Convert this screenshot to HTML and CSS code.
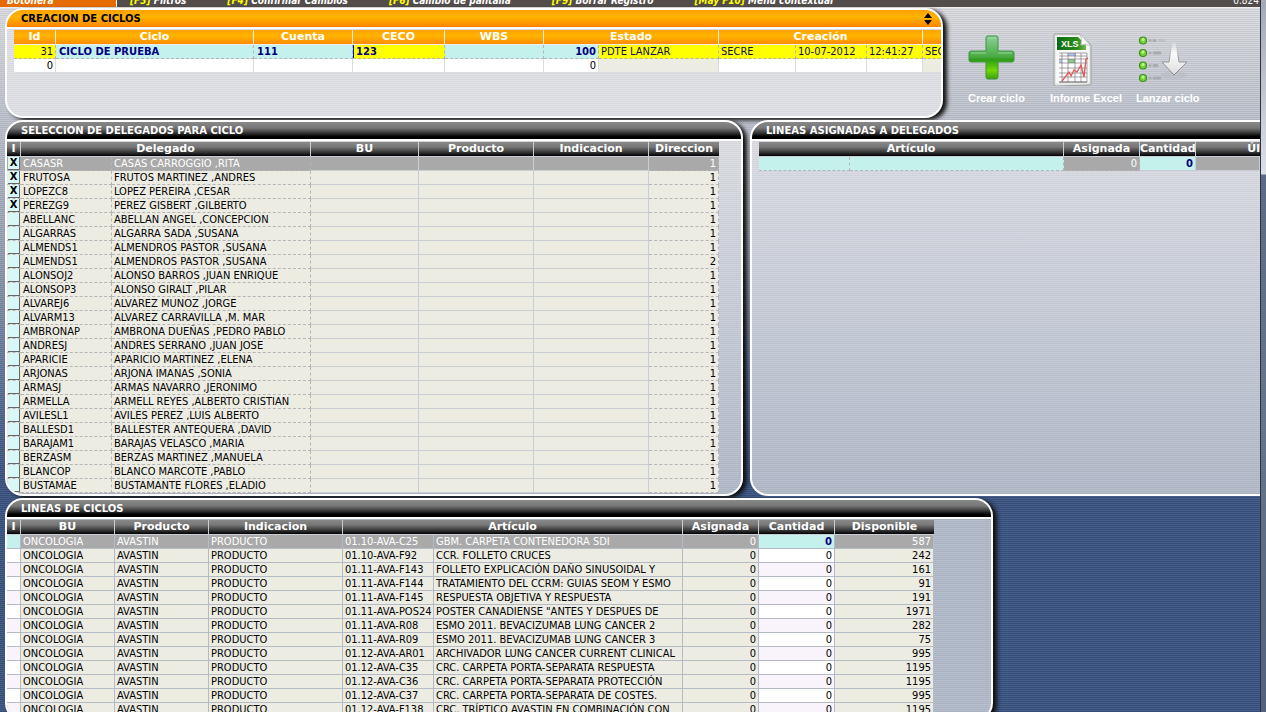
FILE: index.html
```html
<!DOCTYPE html>
<html lang="es">
<head>
<meta charset="utf-8">
<title>Creación de ciclos</title>
<link rel="stylesheet" href="styles.css">
</head>
<body>
<div class="screen">
<nav class="toolbar">
  <a class="tab" href="#">Botonera</a>
  <a href="#"><b>[F3]</b> Filtros</a>
  <a href="#"><b>[F4]</b> Confirmar Cambios</a>
  <a href="#"><b>[F6]</b> Cambio de pantalla</a>
  <a href="#"><b>[F9]</b> Borrar Registro</a>
  <a href="#"><b>[May F10]</b> Menú contextual</a>
  <span class="version">0.824</span>
</nav>

<div class="row top-row">
<section class="panel orange">
  <header class="title"><h2>CREACION DE CICLOS</h2>
    <svg class="sorter" width="8" height="12" viewBox="0 0 8 12" aria-hidden="true"><path d="M4 0 8 5H0zM4 12 0 7H8z"/></svg>
  </header>
  <table class="cycles">
    <colgroup><col class="w42"><col class="w198"><col class="w99"><col class="w92"><col class="w99"><col class="w55"><col class="w120"><col class="w77"><col class="w71"><col class="w56"><col class="w56"></colgroup>
    <thead><tr><th>Id</th><th>Ciclo</th><th>Cuenta</th><th>CECO</th><th>WBS</th><th colspan="2">Estado</th><th colspan="3">Creación</th><th></th></tr></thead>
    <tbody>
      <tr class="current"><td class="num yellow">31</td><td class="aqua"><input aria-label="Ciclo" value="CICLO DE PRUEBA"></td><td class="aqua"><input aria-label="Cuenta" value="111"></td><td class="yellow caret"><input aria-label="CECO" value="123"></td><td class="aqua"><input aria-label="WBS"></td><td class="aqua"><input class="right" aria-label="Estado" value="100"></td><td class="yellow">PDTE LANZAR</td><td class="yellow">SECRE</td><td class="yellow">10-07-2012</td><td class="yellow">12:41:27</td><td class="yellow">SEC</td></tr>
      <tr class="blank"><td class="num">0</td><td></td><td></td><td></td><td></td><td class="num">0</td><td class="beige"></td><td></td><td></td><td></td><td class="beige"></td></tr>
    </tbody>
  </table>
</section>
<div class="actions">
  <button class="action">
    <svg width="48" height="56" viewBox="0 0 48 56" aria-hidden="true">
      <defs><linearGradient id="plus" x1="0" y1="0" x2="0" y2="1"><stop offset="0" stop-color="#8fcf9b"/><stop offset=".48" stop-color="#49ab43"/><stop offset=".55" stop-color="#2f9b16"/><stop offset=".8" stop-color="#72d800"/><stop offset="1" stop-color="#3e9f0c"/></linearGradient></defs>
      <path d="M20 6h8q2 0 2 2v13h14q2 0 2 2v7q0 2-2 2H30v15q0 2-2 2h-8q-2 0-2-2V32H3q-2 0-2-2v-7q0-2 2-2h15V8q0-2 2-2z" fill="url(#plus)" stroke="#3a9640"/>
      <path d="M20 8h8M3 23h15M30 23h14" stroke="#b5e2b9" opacity=".7"/>
    </svg>
    <span>Crear ciclo</span>
  </button>
  <button class="action">
    <svg width="48" height="56" viewBox="0 0 48 56" aria-hidden="true">
      <path d="M5 4h25l11 11v38q0 2-2 2L6 56q-2 0-2-2V6q0-2 1-2z" fill="#e8eae8" stroke="#9b9e9b"/>
      <path d="M6 6h23l10 10v36L6 53z" fill="#f8f9f8"/>
      <linearGradient id="xls"><stop offset="0" stop-color="#0a6b16"/><stop offset=".7" stop-color="#2c8d17"/><stop offset="1" stop-color="#76b74d"/></linearGradient>
      <path d="M7 7h21l8 8v5H7z" fill="url(#xls)"/>
      <path d="M30 4q3 5 1 11 5-2 10 1z" fill="#fff" stroke="#c4c8c4"/>
      <text x="11" y="17" class="xls-label">XLS</text>
      <path d="M9 23h29v29H9z" fill="#fff"/>
      <path d="M18 23h8v3h-8zM9 29h3v4H9z" fill="#b3c4ef"/><path d="M18 29h7v4h-7z" fill="#8bc888"/>
      <path d="M9 23h28M9 26h28M9 29h28M9 33h28M9 38h28M9 43h28M9 47h28M12 23v29M18 23v29M25 23v29M31 23v29M37 23v29" fill="none" stroke="#666" stroke-width=".6"/>
      <path d="m12 51 7-9 2 4 3-6 3 2 4-7 3 12 2-18 2-1" fill="none" stroke="#e05a5a" stroke-width="1.4"/>
      <path d="M9 52h28" stroke="#555"/>
    </svg>
    <span>Informe Excel</span>
  </button>
  <button class="action">
    <svg width="56" height="56" viewBox="0 0 56 56" aria-hidden="true">
      <defs><linearGradient id="arrow" x1="0" y1="0" x2="0" y2="1"><stop offset="0" stop-color="#fff" stop-opacity=".1"/><stop offset=".35" stop-color="#fafafa"/><stop offset="1" stop-color="#dedede"/></linearGradient><linearGradient id="edge" x1="0" y1="0" x2="0" y2="1"><stop offset="0" stop-color="#aaa" stop-opacity="0"/><stop offset=".5" stop-color="#999"/><stop offset="1" stop-color="#888"/></linearGradient></defs>
      <g fill="#76d631" stroke="#3d8d1d" stroke-width="1.2"><circle cx="7" cy="10.500" r="3.500"/><circle cx="7" cy="23" r="3.500"/><circle cx="7" cy="35.500" r="3.500"/><circle cx="7" cy="48" r="3.500"/></g>
      <g fill="#c3f59c"><circle cx="7" cy="9.500" r="1.500"/><circle cx="7" cy="22" r="1.500"/><circle cx="7" cy="34.500" r="1.500"/><circle cx="7" cy="47" r="1.500"/></g>
      <g stroke="#a9abaf" stroke-width="3" stroke-linecap="round"><path d="M14 10.500h.1M18 10.500h1M14 23h.1M18 23h6M14 35.500h.1M18 35.500h3M14 48h.1M18 48h6"/><path d="M23 10.500h2M28 10.500h.1" opacity=".4"/></g>
      <ellipse cx="38" cy="45" rx="13" ry="4" fill="#888" opacity=".12"/>
      <path d="M36 12h4l3 20h8L38 45 26 32h7z" fill="url(#arrow)" stroke="url(#edge)"/>
    </svg>
    <span>Lanzar ciclo</span>
  </button>
</div>
</div>

<div class="row middle-row">
<section class="panel delegates">
  <header class="title"><h2>SELECCION DE DELEGADOS PARA CICLO</h2></header>
  <table class="grid dashed">
    <colgroup><col class="w14"><col class="w91"><col class="w199"><col class="w108"><col class="w115"><col class="w115"><col class="w70"></colgroup>
    <thead><tr><th>I</th><th colspan="2">Delegado</th><th>BU</th><th>Producto</th><th>Indicacion</th><th>Direccion</th></tr></thead>
    <tbody>
      <tr class="selected"><td><button class="mark">X</button></td><td>CASASR</td><td>CASAS CARROGGIO ,RITA</td><td></td><td></td><td></td><td>1</td></tr>
      <tr><td><button class="mark">X</button></td><td>FRUTOSA</td><td>FRUTOS MARTINEZ ,ANDRES</td><td></td><td></td><td></td><td>1</td></tr>
      <tr><td><button class="mark">X</button></td><td>LOPEZC8</td><td>LOPEZ PEREIRA ,CESAR</td><td></td><td></td><td></td><td>1</td></tr>
      <tr><td><button class="mark">X</button></td><td>PEREZG9</td><td>PEREZ GISBERT ,GILBERTO</td><td></td><td></td><td></td><td>1</td></tr>
      <tr><td><button class="mark" aria-label="Incluir"></button></td><td>ABELLANC</td><td>ABELLAN ANGEL ,CONCEPCION</td><td></td><td></td><td></td><td>1</td></tr>
      <tr><td><button class="mark" aria-label="Incluir"></button></td><td>ALGARRAS</td><td>ALGARRA SADA ,SUSANA</td><td></td><td></td><td></td><td>1</td></tr>
      <tr><td><button class="mark" aria-label="Incluir"></button></td><td>ALMENDS1</td><td>ALMENDROS PASTOR ,SUSANA</td><td></td><td></td><td></td><td>1</td></tr>
      <tr><td><button class="mark" aria-label="Incluir"></button></td><td>ALMENDS1</td><td>ALMENDROS PASTOR ,SUSANA</td><td></td><td></td><td></td><td>2</td></tr>
      <tr><td><button class="mark" aria-label="Incluir"></button></td><td>ALONSOJ2</td><td>ALONSO BARROS ,JUAN ENRIQUE</td><td></td><td></td><td></td><td>1</td></tr>
      <tr><td><button class="mark" aria-label="Incluir"></button></td><td>ALONSOP3</td><td>ALONSO GIRALT ,PILAR</td><td></td><td></td><td></td><td>1</td></tr>
      <tr><td><button class="mark" aria-label="Incluir"></button></td><td>ALVAREJ6</td><td>ALVAREZ MUNOZ ,JORGE</td><td></td><td></td><td></td><td>1</td></tr>
      <tr><td><button class="mark" aria-label="Incluir"></button></td><td>ALVARM13</td><td>ALVAREZ CARRAVILLA ,M. MAR</td><td></td><td></td><td></td><td>1</td></tr>
      <tr><td><button class="mark" aria-label="Incluir"></button></td><td>AMBRONAP</td><td>AMBRONA DUEÑAS ,PEDRO PABLO</td><td></td><td></td><td></td><td>1</td></tr>
      <tr><td><button class="mark" aria-label="Incluir"></button></td><td>ANDRESJ</td><td>ANDRES SERRANO ,JUAN JOSE</td><td></td><td></td><td></td><td>1</td></tr>
      <tr><td><button class="mark" aria-label="Incluir"></button></td><td>APARICIE</td><td>APARICIO MARTINEZ ,ELENA</td><td></td><td></td><td></td><td>1</td></tr>
      <tr><td><button class="mark" aria-label="Incluir"></button></td><td>ARJONAS</td><td>ARJONA IMANAS ,SONIA</td><td></td><td></td><td></td><td>1</td></tr>
      <tr><td><button class="mark" aria-label="Incluir"></button></td><td>ARMASJ</td><td>ARMAS NAVARRO ,JERONIMO</td><td></td><td></td><td></td><td>1</td></tr>
      <tr><td><button class="mark" aria-label="Incluir"></button></td><td>ARMELLA</td><td>ARMELL REYES ,ALBERTO CRISTIAN</td><td></td><td></td><td></td><td>1</td></tr>
      <tr><td><button class="mark" aria-label="Incluir"></button></td><td>AVILESL1</td><td>AVILES PEREZ ,LUIS ALBERTO</td><td></td><td></td><td></td><td>1</td></tr>
      <tr><td><button class="mark" aria-label="Incluir"></button></td><td>BALLESD1</td><td>BALLESTER ANTEQUERA ,DAVID</td><td></td><td></td><td></td><td>1</td></tr>
      <tr><td><button class="mark" aria-label="Incluir"></button></td><td>BARAJAM1</td><td>BARAJAS VELASCO ,MARIA</td><td></td><td></td><td></td><td>1</td></tr>
      <tr><td><button class="mark" aria-label="Incluir"></button></td><td>BERZASM</td><td>BERZAS MARTINEZ ,MANUELA</td><td></td><td></td><td></td><td>1</td></tr>
      <tr><td><button class="mark" aria-label="Incluir"></button></td><td>BLANCOP</td><td>BLANCO MARCOTE ,PABLO</td><td></td><td></td><td></td><td>1</td></tr>
      <tr><td><button class="mark" aria-label="Incluir"></button></td><td>BUSTAMAE</td><td>BUSTAMANTE FLORES ,ELADIO</td><td></td><td></td><td></td><td>1</td></tr>
    </tbody>
  </table>
</section>
<section class="panel assigned">
  <header class="title"><h2>LINEAS ASIGNADAS A DELEGADOS</h2></header>
  <table class="grid dashed">
    <colgroup><col class="w91"><col class="w214"><col class="w76"><col class="w56"><col class="w64"></colgroup>
    <thead><tr><th colspan="2">Artículo</th><th>Asignada</th><th>Cantidad</th><th class="last">Úl</th></tr></thead>
    <tbody><tr class="selected"><td class="aqua"></td><td class="aqua"></td><td class="num">0</td><td class="aqua"><input class="right" aria-label="Cantidad" value="0"></td><td></td></tr></tbody>
  </table>
</section>
</div>

<section class="panel lines">
  <header class="title"><h2>LINEAS DE CICLOS</h2></header>
  <table class="grid">
    <colgroup><col class="w14"><col class="w94"><col class="w94"><col class="w134"><col class="w91"><col class="w249"><col class="w76"><col class="w76"><col class="w99"></colgroup>
    <thead><tr><th>I</th><th>BU</th><th>Producto</th><th>Indicacion</th><th colspan="2">Artículo</th><th>Asignada</th><th>Cantidad</th><th>Disponible</th></tr></thead>
    <tbody>
      <tr class="selected"><td class="aqua"></td><td>ONCOLOGIA</td><td>AVASTIN</td><td>PRODUCTO</td><td>01.10-AVA-C25</td><td>GBM. CARPETA CONTENEDORA SDI</td><td>0</td><td class="aqua"><input class="right" aria-label="Cantidad" value="0"></td><td>587</td></tr>
      <tr><td></td><td>ONCOLOGIA</td><td>AVASTIN</td><td>PRODUCTO</td><td>01.10-AVA-F92</td><td>CCR. FOLLETO CRUCES</td><td>0</td><td>0</td><td>242</td></tr>
      <tr><td></td><td>ONCOLOGIA</td><td>AVASTIN</td><td>PRODUCTO</td><td>01.11-AVA-F143</td><td>FOLLETO EXPLICACIÓN DAÑO SINUSOIDAL Y</td><td>0</td><td>0</td><td>161</td></tr>
      <tr><td></td><td>ONCOLOGIA</td><td>AVASTIN</td><td>PRODUCTO</td><td>01.11-AVA-F144</td><td>TRATAMIENTO DEL CCRM: GUIAS SEOM Y ESMO</td><td>0</td><td>0</td><td>91</td></tr>
      <tr><td></td><td>ONCOLOGIA</td><td>AVASTIN</td><td>PRODUCTO</td><td>01.11-AVA-F145</td><td>RESPUESTA OBJETIVA Y RESPUESTA</td><td>0</td><td>0</td><td>191</td></tr>
      <tr><td></td><td>ONCOLOGIA</td><td>AVASTIN</td><td>PRODUCTO</td><td>01.11-AVA-POS24</td><td>POSTER CANADIENSE "ANTES Y DESPUES DE</td><td>0</td><td>0</td><td>1971</td></tr>
      <tr><td></td><td>ONCOLOGIA</td><td>AVASTIN</td><td>PRODUCTO</td><td>01.11-AVA-R08</td><td>ESMO 2011. BEVACIZUMAB LUNG CANCER 2</td><td>0</td><td>0</td><td>282</td></tr>
      <tr><td></td><td>ONCOLOGIA</td><td>AVASTIN</td><td>PRODUCTO</td><td>01.11-AVA-R09</td><td>ESMO 2011. BEVACIZUMAB LUNG CANCER 3</td><td>0</td><td>0</td><td>75</td></tr>
      <tr><td></td><td>ONCOLOGIA</td><td>AVASTIN</td><td>PRODUCTO</td><td>01.12-AVA-AR01</td><td>ARCHIVADOR LUNG CANCER CURRENT CLINICAL</td><td>0</td><td>0</td><td>995</td></tr>
      <tr><td></td><td>ONCOLOGIA</td><td>AVASTIN</td><td>PRODUCTO</td><td>01.12-AVA-C35</td><td>CRC. CARPETA PORTA-SEPARATA RESPUESTA</td><td>0</td><td>0</td><td>1195</td></tr>
      <tr><td></td><td>ONCOLOGIA</td><td>AVASTIN</td><td>PRODUCTO</td><td>01.12-AVA-C36</td><td>CRC. CARPETA PORTA-SEPARATA PROTECCIÓN</td><td>0</td><td>0</td><td>1195</td></tr>
      <tr><td></td><td>ONCOLOGIA</td><td>AVASTIN</td><td>PRODUCTO</td><td>01.12-AVA-C37</td><td>CRC. CARPETA PORTA-SEPARATA DE COSTES.</td><td>0</td><td>0</td><td>995</td></tr>
      <tr><td></td><td>ONCOLOGIA</td><td>AVASTIN</td><td>PRODUCTO</td><td>01.12-AVA-F138</td><td>CRC. TRÍPTICO AVASTIN EN COMBINACIÓN CON</td><td>0</td><td>0</td><td>1195</td></tr>
    </tbody>
  </table>
</section>
</div>
<div class="scroll-edge"></div>
</body>
</html>
```
FILE: styles.css
```css
* { box-sizing: border-box; }
body {
  margin: 0;
  height: 100vh;
  display: flex;
  overflow: hidden;
  font: 11px/13px "DejaVu Sans Condensed", "DejaVu Sans", sans-serif;
  color: #000;
}
.screen {
  flex: 1;
  min-width: 0;
  overflow: hidden;
  background:
    repeating-linear-gradient(rgba(255,255,255,.07) 0 1px, rgba(0,0,30,.06) 1px 2px),
    linear-gradient(#dcdde0 0, #bcc1cb 120px, #98a1b3 240px, #5d7196 380px, #38527f 480px, #38527f 100%);
}
.scroll-edge {
  width: 6px;
  border-left: 1px solid #2c3340;
  background: linear-gradient(#a4a9b6 0, #dcdfe5 174px, #5b6b85 175px, #66768a 60%, #52627d 100%);
}

.toolbar {
  display: flex;
  align-items: flex-end;
  gap: 41px;
  height: 8px;
  overflow: hidden;
  background: #524d4b;
  border-bottom: 1px solid #eee;
  font-size: 10px;
  font-weight: bold;
  font-style: italic;
  line-height: 13px;
  white-space: nowrap;
}
.toolbar a { color: #fff; text-decoration: none; }
.toolbar b { color: #ff0; }
.toolbar .tab {
  width: 117px;
  margin-right: -28px;
  padding-left: 7px;
  background: #e66b00;
  border-right: 1px solid #fff;
}
.version {
  margin-left: auto;
  padding-right: 1px;
  color: #fff;
  font-weight: normal;
  font-style: normal;
}

.row { display: grid; padding-left: 5px; }
.top-row { grid-template-columns: 938fr 317fr; height: 112px; padding-bottom: 2px; }
.middle-row { grid-template-columns: 738fr 510fr; column-gap: 7px; height: 378px; padding-bottom: 2px; }

.panel {
  position: relative;
  overflow: hidden;
  min-width: 0;
  border: 2px solid #fff;
  border-radius: 18px;
  background:
    repeating-linear-gradient(rgba(255,255,255,.1) 0 1px, rgba(0,0,40,.03) 1px 2px),
    linear-gradient(#dedfe3, #cdd1db 35%, #afb8c7);
  box-shadow: 4px 2px 4px #111;
}
.orange {
  background:
    repeating-linear-gradient(rgba(255,255,255,.1) 0 1px, rgba(0,0,40,.03) 1px 2px),
    #dfe0e4;
}
.assigned { border-right: 0; border-radius: 18px 0 0 18px; box-shadow: none; }
.lines {
  width: 983px;
  max-width: calc(100% - 10px);
  width: calc(79% - 7px);
  margin-left: 5px;
  padding-bottom: 2px;
  background:
    repeating-linear-gradient(rgba(255,255,255,.1) 0 1px, rgba(0,0,40,.04) 1px 2px),
    #b0b9c8;
}
.title {
  display: flex;
  align-items: center;
  justify-content: space-between;
  height: 19px;
  padding: 0 9px 0 14px;
  border-bottom: 2px solid #fff;
  background: linear-gradient(#888 0, #777 35%, #333 65%, #000 85%);
  color: #fff;
}
.title h2 { margin: 0; font: bold 10px/14px "DejaVu Sans", sans-serif; }
.orange .title { background: linear-gradient(#ffa000, #ffb400 40%, #ff8400); color: #000; }

table { border-collapse: separate; border-spacing: 0; table-layout: fixed; width: 0; margin-top: 1px; }
.cycles { margin-left: 7px; }
.assigned table { margin-left: 7px; }
th {
  height: 15px;
  padding: 0;
  overflow: hidden;
  border-right: 1px solid #c9cdd6;
  border-bottom: 1px solid #c9cdd6;
  background: linear-gradient(#888, #777 35%, #333 75%, #000);
  color: #fff;
  font: bold 11px/14px "DejaVu Sans", sans-serif;
  white-space: nowrap;
}
th:last-child { border-right: 0; }
th.last { padding-right: 0; text-align: right; }
.cycles th { background: linear-gradient(#ffa200, #ffb400 40%, #ff8c00); border-color: #eee; }
td {
  height: 14px;
  padding: 0 2px;
  overflow: hidden;
  border-right: 1px solid #b4bac6;
  border-bottom: 1px solid #b4bac6;
  background: #ecece3;
  white-space: nowrap;
}
td:nth-child(5) { padding-right: 0; }
.dashed td { border-right: 1px dashed #b5b5b8; border-bottom: 1px dashed #b5b5b8; }
.dashed td:nth-child(4), .dashed td:nth-child(5), .dashed td:nth-child(6) { border-style: solid; border-color: #c9cdd6; border-width: 0 1px 1px 0; }
.selected td { background: #a9a9a9; color: #fff; }
.cycles td { background: #fff; border-color: #ddd; }
.current td { border: dashed #b5b5b8; border-width: 0 1px 1px 0; color: #101050; }
.cycles .yellow { background: #ff0; }
.cycles .beige { background: #ecece3; }
.cycles .aqua, .selected .aqua { background: #c5f1ed; }
.num, .delegates td:last-child, .lines td:nth-child(n+7) { text-align: right; }
.lines td:first-child, .lines td:nth-child(8) { background: #fff; }
.lines tr:nth-child(odd) td:first-child, .lines tr:nth-child(odd) td:nth-child(8) { background: #f9f4fc; }
.lines .selected td.aqua:nth-child(n) { background: #c5f1ed; }
.current .caret { box-shadow: inset 1px 0 #00f; }
.delegates td:first-child { padding: 0 0 0 1px; border-right: 0; }

input {
  display: block;
  width: 100%;
  height: 13px;
  margin: 0;
  padding: 0 1px;
  border: 0;
  background: transparent;
  color: #000080;
  font: bold 10px/13px "DejaVu Sans", sans-serif;
}
.right { padding-right: 0; text-align: right; }
.mark {
  display: block;
  width: 12px;
  height: 13px;
  padding: 0;
  border: solid #666;
  border-width: 0 1px 1px 0;
  background: #d8f8f8;
  color: #000;
  font: bold 10px/12px "DejaVu Sans", sans-serif;
}

.actions { display: flex; align-items: flex-start; padding: 22px 0 0 21px; }
.action {
  display: flex;
  flex-direction: column;
  align-items: flex-start;
  gap: 5px;
  padding: 0 0 0 4px;
  border: 0;
  background: none;
  color: #fff;
  font: bold 11px/14px "Liberation Sans", Arial, sans-serif;
  white-space: nowrap;
}
.action:nth-child(2) { margin-left: 21px; }
.action:nth-child(3) { margin-left: 10px; }
.xls-label { fill: #fff; font: bold 9px "Liberation Sans", Arial, sans-serif; }

.w14 { width: 14px; } .w42 { width: 42px; } .w55 { width: 55px; } .w56 { width: 56px; }
.w64 { width: 64px; } .w70 { width: 70px; } .w71 { width: 71px; } .w76 { width: 76px; }
.w77 { width: 77px; } .w91 { width: 91px; } .w92 { width: 92px; } .w94 { width: 94px; }
.w99 { width: 99px; } .w108 { width: 108px; } .w115 { width: 115px; } .w120 { width: 120px; }
.w134 { width: 134px; } .w198 { width: 198px; } .w199 { width: 199px; } .w214 { width: 214px; }
.w249 { width: 249px; }
```
